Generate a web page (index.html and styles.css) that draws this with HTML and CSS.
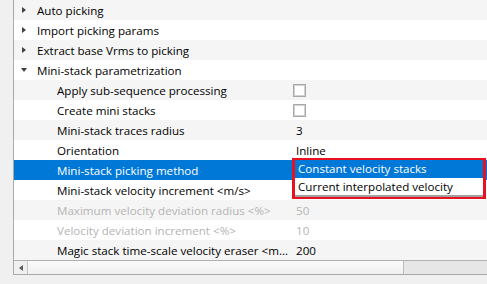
FILE: index.html
```html
<!DOCTYPE html>
<html>
<head>
<meta charset="utf-8">
<link rel="stylesheet" href="styles.css">
</head>
<body>
<div class="tree">
  <div class="rows">
    <div class="row alt"><div class="name l0"><span class="toggle"><span class="tri-right"></span></span><span class="label">Auto picking</span></div><div class="value"></div></div>
    <div class="row"><div class="name l0"><span class="toggle"><span class="tri-right"></span></span><span class="label">Import picking params</span></div><div class="value"></div></div>
    <div class="row alt"><div class="name l0"><span class="toggle"><span class="tri-right"></span></span><span class="label">Extract base Vrms to picking</span></div><div class="value"></div></div>
    <div class="row"><div class="name l0"><span class="toggle"><span class="tri-down"></span></span><span class="label">Mini-stack parametrization</span></div><div class="value"></div></div>
    <div class="row alt"><div class="name l1"><span class="label">Apply sub-sequence processing</span></div><div class="value check"><span class="checkbox"></span></div></div>
    <div class="row"><div class="name l1"><span class="label">Create mini stacks</span></div><div class="value check"><span class="checkbox"></span></div></div>
    <div class="row alt"><div class="name l1"><span class="label">Mini-stack traces radius</span></div><div class="value">3</div></div>
    <div class="row"><div class="name l1"><span class="label">Orientation</span></div><div class="value">Inline</div></div>
    <div class="row sel"><div class="name l1"><span class="label">Mini-stack picking method</span></div><div class="value"></div></div>
    <div class="row"><div class="name l1"><span class="label">Mini-stack velocity increment &lt;m/s&gt;</span></div><div class="value"></div></div>
    <div class="row alt disabled"><div class="name l1"><span class="label">Maximum velocity deviation radius &lt;%&gt;</span></div><div class="value">50</div></div>
    <div class="row disabled"><div class="name l1"><span class="label">Velocity deviation increment &lt;%&gt;</span></div><div class="value">10</div></div>
    <div class="row alt"><div class="name l1"><span class="label">Magic stack time-scale velocity eraser &lt;m/s&gt;</span></div><div class="value">200</div></div>
  </div>
  <div class="hscroll">
    <div class="sb-btn"><span class="tri-left"></span></div>
    <div class="sb-thumb"></div>
    <div class="sb-track"></div>
  </div>
  <div class="dropdown">
    <div class="dd-item dd-active">Constant velocity stacks</div>
    <div class="dd-item">Current interpolated velocity</div>
  </div>
</div>
</body>
</html>
```

FILE: styles.css
```css
html, body {
  margin: 0;
  padding: 0;
}
body {
  background: #f0f0f0;
  width: 487px;
  height: 284px;
  overflow: hidden;
  font-family: "Open Sans", "Noto Sans", sans-serif;
  font-size: 11.6px;
  color: #000;
}
.tree {
  position: relative;
  margin-left: 13px;
  width: 474px;
  background: #fff;
  border-left: 1px solid #a9a9a9;
  border-bottom: 1px solid #a9a9a9;
}
.row {
  display: grid;
  grid-template-columns: 278px 1fr;
  height: 20px;
  align-items: center;
  background: #fff;
}
.row.alt { background: #f5f5f5; }
.row.sel { background: #0078d7; color: #fff; }
.row.disabled { color: #b4b4b4; }
.name {
  display: flex;
  align-items: center;
  white-space: nowrap;
  overflow: hidden;
  padding-right: 4px;
  min-width: 0;
}
.label {
  overflow: hidden;
  text-overflow: ellipsis;
  white-space: nowrap;
  min-width: 0;
}
.l0 { padding-left: 2px; }
.l1 { padding-left: 43px; }
.toggle {
  flex: none;
  width: 15px;
  height: 20px;
  margin-right: 6px;
  display: flex;
  align-items: center;
  justify-content: center;
}
.tri-right {
  width: 0;
  height: 0;
  border-left: 4px solid #404040;
  border-top: 3.5px solid transparent;
  border-bottom: 3.5px solid transparent;
}
.tri-down {
  width: 0;
  height: 0;
  border-top: 4px solid #404040;
  border-left: 3.5px solid transparent;
  border-right: 3.5px solid transparent;
}
.value {
  padding-left: 4px;
  white-space: nowrap;
  display: flex;
  align-items: center;
}
.value.check { padding-left: 1px; }
.checkbox {
  width: 11px;
  height: 11px;
  border: 1px solid #a8a8a8;
  box-shadow: inset 0 0 0 1px #d2d2d2;
  background: #fff;
}
.hscroll {
  display: flex;
  height: 13px;
  border-top: 1px solid #b0b0b0;
  background: #e6e6e6;
}
.sb-btn {
  width: 13px;
  border-right: 1px solid #c6c6c6;
  background: #f0f0f0;
  display: flex;
  align-items: center;
  justify-content: center;
}
.tri-left {
  width: 0;
  height: 0;
  border-right: 4px solid #5a5a5a;
  border-top: 3.5px solid transparent;
  border-bottom: 3.5px solid transparent;
}
.sb-thumb {
  width: 375px;
  background: linear-gradient(#fbfbfb, #f0f0f0);
  border-right: 1px solid #bdbdbd;
}
.sb-track {
  flex: 1;
  background: #e6e6e6;
}
.dropdown {
  position: absolute;
  left: 278px;
  top: 158px;
  width: 188px;
  border: 3px solid #e8111f;
  border-top-width: 2px;
  border-bottom-width: 2px;
  background: #fff;
}
.dd-item {
  height: 17px;
  line-height: 17px;
  padding-left: 3px;
  white-space: nowrap;
  overflow: hidden;
}
.dd-item.dd-active {
  height: 18px;
  line-height: 18px;
  background: #0078d7;
  color: #fff;
}
.dd-item:last-child {
  border-bottom: 2px solid #a0a0a0;
}
```
